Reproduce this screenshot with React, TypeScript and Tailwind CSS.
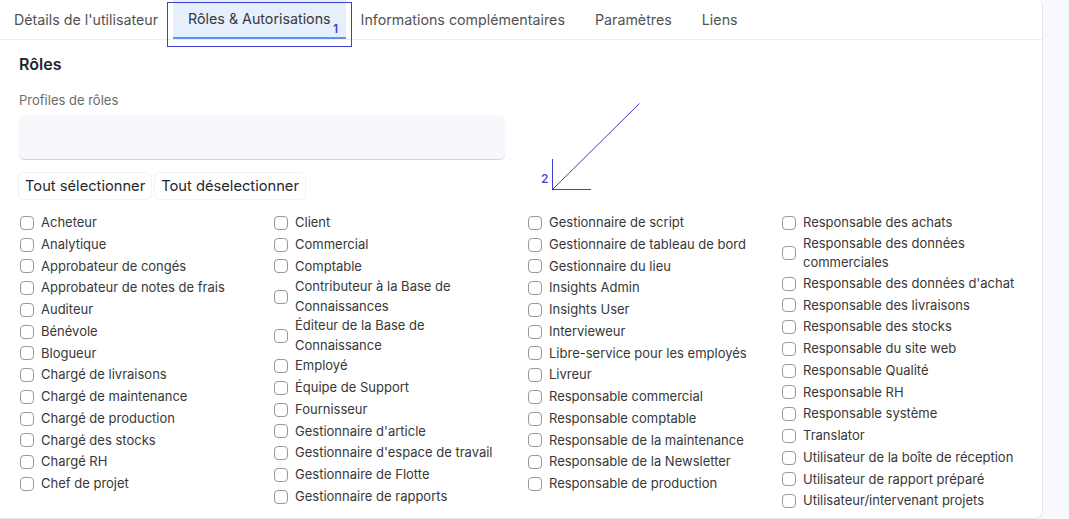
import React from "react";

const col1 = [
  "Acheteur",
  "Analytique",
  "Approbateur de congés",
  "Approbateur de notes de frais",
  "Auditeur",
  "Bénévole",
  "Blogueur",
  "Chargé de livraisons",
  "Chargé de maintenance",
  "Chargé de production",
  "Chargé des stocks",
  "Chargé RH",
  "Chef de projet",
];
const col2 = [
  "Client",
  "Commercial",
  "Comptable",
  "Contributeur à la Base de Connaissances",
  "Éditeur de la Base de Connaissance",
  "Employé",
  "Équipe de Support",
  "Fournisseur",
  "Gestionnaire d'article",
  "Gestionnaire d'espace de travail",
  "Gestionnaire de Flotte",
  "Gestionnaire de rapports",
];
const col3 = [
  "Gestionnaire de script",
  "Gestionnaire de tableau de bord",
  "Gestionnaire du lieu",
  "Insights Admin",
  "Insights User",
  "Intervieweur",
  "Libre-service pour les employés",
  "Livreur",
  "Responsable commercial",
  "Responsable comptable",
  "Responsable de la maintenance",
  "Responsable de la Newsletter",
  "Responsable de production",
];
const col4 = [
  "Responsable des achats",
  "Responsable des données commerciales",
  "Responsable des données d'achat",
  "Responsable des livraisons",
  "Responsable des stocks",
  "Responsable du site web",
  "Responsable Qualité",
  "Responsable RH",
  "Responsable système",
  "Translator",
  "Utilisateur de la boîte de réception",
  "Utilisateur de rapport préparé",
  "Utilisateur/intervenant projets",
];

function Item({ label }: { label: string }) {
  return (
    <div className="flex items-center min-h-[21.75px]">
      <span className="w-[14px] h-[14px] ml-[1px] mr-[7px] shrink-0 rounded-[4px] border border-[#999999] bg-white" />
      <span className="text-[13px] leading-[19.5px] text-[#383838]">{label}</span>
    </div>
  );
}

export default function App() {
  const tabs = [
    "Détails de l'utilisateur",
    "Rôles & Autorisations",
    "Informations complémentaires",
    "Paramètres",
    "Liens",
  ];
  return (
    <div
      className="relative w-full h-[519px] bg-[#f8f9fd] overflow-hidden"
      style={{ fontFamily: "Inter, 'Noto Sans', sans-serif" }}
    >
      <div className="w-[1043px] h-[519px] bg-white border-r border-b border-[#e6e6e6] rounded-tr-[6px] rounded-br-[8px]">
        <div className="flex h-[40px] border-b border-[#ededed]">
          <div className="flex h-full ml-[-1px]">
            {tabs.map((t, i) => (
              <div
                key={t}
                className={
                  i === 1
                    ? "flex items-center px-[15px] h-full text-[14.25px] text-[#383838] bg-[#e6effd] border-b-2 border-[#5f8ff2]"
                    : "flex items-center px-[15px] h-full text-[14.25px] text-[#525252]"
                }
              >
                {t}
              </div>
            ))}
          </div>
        </div>
        <div className="px-[19px]">
          <div className="pt-[14px] text-[16px] leading-[20px] font-semibold text-[#1f272e]">Rôles</div>
          <div className="mt-[18px] text-[13px] leading-[17px] text-[#6b6b6b]">Profiles de rôles</div>
          <div className="mt-[6px] w-[486px] h-[44px] rounded-[6px] bg-[#f7f8fc] shadow-[0_1px_1px_rgba(0,0,0,0.18)]" />
          <div className="mt-[14px] flex gap-[4px]">
            <div className="h-[26px] px-[6px] flex items-center rounded-[5px] bg-white shadow-[0_0_1px_1px_rgba(0,0,0,0.06)] text-[14.7px] text-[#1f272e]">
              Tout sélectionner
            </div>
            <div className="h-[26px] px-[6px] flex items-center rounded-[5px] bg-white shadow-[0_0_1px_1px_rgba(0,0,0,0.06)] text-[14.7px] text-[#1f272e]">
              Tout déselectionner
            </div>
          </div>
          <div className="mt-[13px] grid grid-cols-[repeat(4,254px)]">
            {[col1, col2, col3, col4].map((c, i) => (
              <div key={i} className="flex flex-col pr-[20px]">
                {c.map((l) => (
                  <Item key={l} label={l} />
                ))}
              </div>
            ))}
          </div>
        </div>
      </div>

      {/* annotation 1 */}
      <div className="absolute left-[167px] top-[2px] w-[185px] h-[45px] border border-[#3b3fcc]" />
      <div className="absolute left-[333px] top-[21px] text-[12px] leading-[16px] font-semibold text-[#3b3fcc]">1</div>

      {/* annotation 2 */}
      <svg className="absolute left-0 top-0" width="1069" height="519" style={{ pointerEvents: "none" }}>
        <line x1="639.5" y1="103.5" x2="552.5" y2="189.5" stroke="#3b3fcc" strokeWidth="1" />
        <line x1="552.5" y1="159" x2="552.5" y2="190" stroke="#3b3fcc" strokeWidth="1" />
        <line x1="552" y1="189.5" x2="591" y2="189.5" stroke="#3b3fcc" strokeWidth="1" />
      </svg>
      <div className="absolute left-[541px] top-[171px] text-[12px] leading-[16px] font-medium text-[#3b3fcc]">2</div>
    </div>
  );
}
